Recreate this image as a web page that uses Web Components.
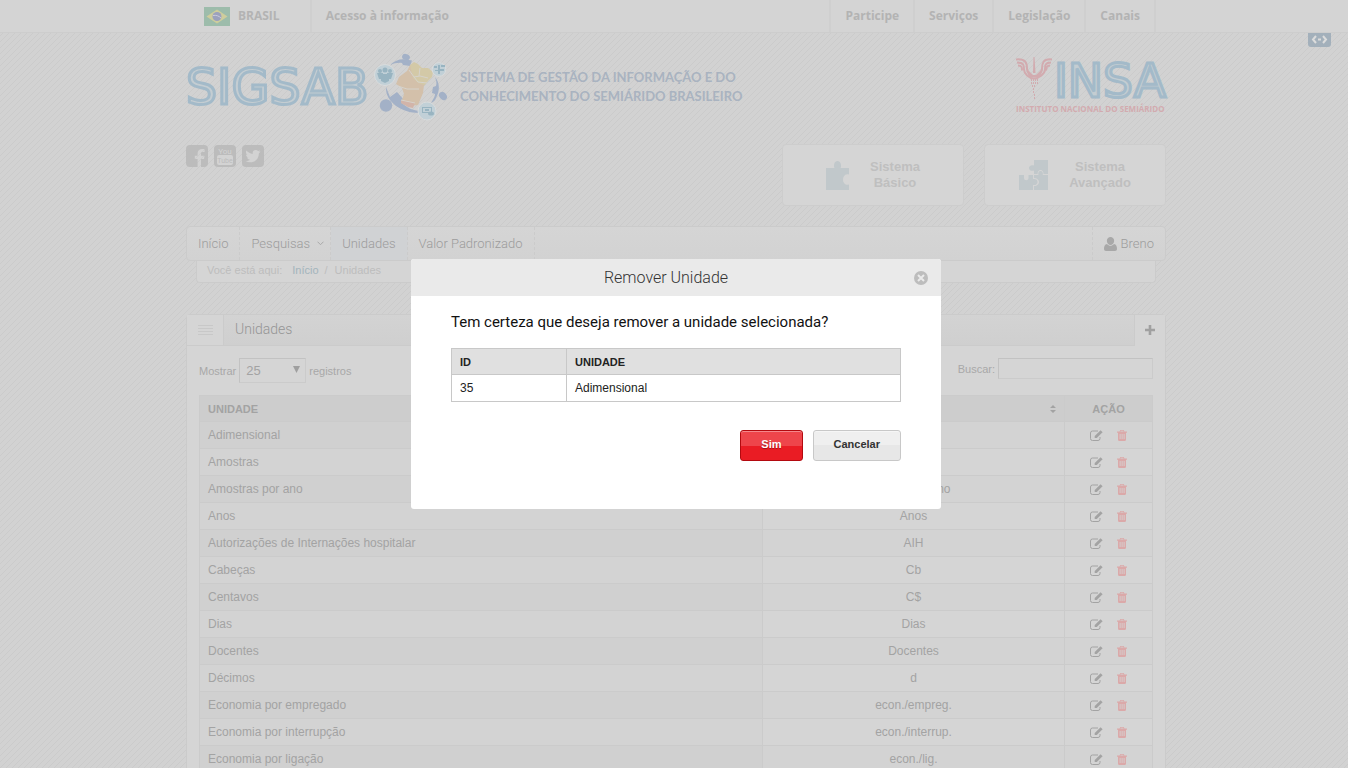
<!DOCTYPE html>
<html lang="pt-BR">
<head>
<meta charset="utf-8">
<title>SIGSAB - Unidades</title>
<style>
  html { height: 100%; overflow: hidden; }
  body {
    margin: 0;
    min-height: 100%;
    font: 11px/18px "Liberation Sans", Arial, sans-serif;
    color: #a8a8a8;
    background-color: #d2d2d2;
    background-image: linear-gradient(135deg, transparent 46%, #cbcbcb 46%, #cbcbcb 54%, transparent 54%);
    background-size: 6px 6px;
    --line: #cbcbcb;
    --panel: #d5d5d5;
    --light: Roboto, "Liberation Sans", sans-serif;
    --page: 980px;
  }
</style>
</head>
<body>
<sig-app></sig-app>
<script>
const define = (name, html, setup) => {
  const tpl = document.createElement('template');
  tpl.innerHTML = html;
  customElements.define(name, class extends HTMLElement {
    constructor() {
      super();
      this.attachShadow({ mode: 'open' }).append(tpl.content.cloneNode(true));
    }
    connectedCallback() { if (setup) setup(this, this.shadowRoot); }
  });
};

/* Icons, drawn in the current colour */
const ICONS = {
  facebook: ['0 0 22 22', '<path fill-rule="evenodd" d="M4 0h14a4 4 0 0 1 4 4v14a4 4 0 0 1-4 4h-3v-8h3l.5-3.300H15V8.700c0-1 .4-1.600 1.700-1.600h1.900V4.100c-.4-.1-1.400-.2-2.500-.2-2.700 0-4.500 1.600-4.500 4.500v2.300H8.800V14h2.800v8H4a4 4 0 0 1-4-4V4a4 4 0 0 1 4-4z"/>'],
  youtube: ['0 0 22 22', '<rect width="22" height="22" rx="4"/><rect x="3" y="10" width="16" height="10" rx="2" fill="#d3d3d3"/><text x="11" y="8.500" font-size="8" text-anchor="middle" fill="#d3d3d3" font-family="Roboto, Liberation Sans">You</text><text x="11" y="18" font-size="7" text-anchor="middle" font-family="Roboto, Liberation Sans">Tube</text>'],
  twitter: ['0 0 22 22', '<rect width="22" height="22" rx="4"/><path fill="#d3d3d3" d="M18.500 6.500c-.6.300-1.200.4-1.800.5.700-.4 1.100-1 1.400-1.700-.6.300-1.300.6-2 .7a3.100 3.100 0 0 0-5.300 2.900C8.200 8.700 6 7.500 4.400 5.600c-.8 1.500-.4 3.200 1 4.200-.5 0-1-.2-1.400-.4 0 1.500 1.100 2.800 2.500 3.100-.5.100-.9.100-1.400 0 .4 1.300 1.500 2.100 2.900 2.200-1.300 1-2.900 1.500-4.500 1.300 5.700 3.400 13.500.3 13.400-7.800.6-.5 1.200-1 1.600-1.700z"/>'],
  puzzle: ['0 0 23 29', '<path d="M0 7h8.500C7.500 5.500 7.800 0 11.500 0s4.200 5.500 3 7H23v6.500c-3-1-6 1-6 5s3 6 6 5V29H0z"/>'],
  puzzles: ['0 0 29 30', '<path d="M15 0h14v14h-4.500c0-2-1-4-3-4s-3 2-3 4H15v-3.500c-2.500 1-5-.3-5-2.500s2.500-3.500 5-2.500zM0 15h5v3c0 3 4.500 3 4.500 0v-3H14v4c3-.5 4.500.8 4.500 3s-2 3.500-4.500 3v5H0zM15 15h4.500c-.8-2 .3-4 2-4s3 2 2.200 4H29v15H15v-4c3.500 0 5-2 5-4s-2-4-5-4z"/>'],
  user: ['0 0 13 14', '<path d="M6.500 0a3.600 3.600 0 0 1 3.600 3.900C10.100 6 8.500 8 6.500 8S2.900 6 2.900 3.900A3.600 3.600 0 0 1 6.500 0zM3 7c2 2.400 5 2.400 7 0 2.300.2 3 2.700 3 5 0 1.200-.8 2-2 2H2c-1.200 0-2-.8-2-2 0-2.300.7-4.800 3-5z"/>'],
  caret: ['0 0 7 5', '<path fill="none" stroke="currentColor" d="M.5.7l3 3 3-3"/>'],
  list: ['0 0 15 11', '<path fill="none" stroke="currentColor" d="M0 .5h15M0 3.500h15M0 6.500h15M0 9.500h15"/>'],
  plus: ['0 0 10 10', '<path d="M3.700 0h2.600v3.700H10v2.600H6.300V10H3.700V6.300H0V3.700h3.700z"/>'],
  sort: ['0 0 6 8', '<path d="M0 3l3-3 3 3zM0 5h6L3 8z"/>'],
  arrow: ['0 0 7 7', '<path d="M0 0h7L3.500 7z"/>'],
  edit: ['0 0 13 11', '<path fill="none" stroke="currentColor" d="M8 1H2.500a2 2 0 0 0-2 2v5.500a2 2 0 0 0 2 2H8a2 2 0 0 0 2-2V7"/><path d="M10.600.3l2 2L6.800 8H4.700V6z"/>'],
  trash: ['0 0 10 11', '<path fill-rule="evenodd" d="M3.200 0h3.600l.6 1.500H10v1.200H9V9.500C9 10.400 8.500 11 7.700 11H2.300C1.500 11 1 10.400 1 9.500V2.700H0V1.500h2.600zM3.700.8l-.3.700h3.200l-.3-.7zM2.700 4v5h.8V4zm2 0v5h.8V4zm2 0v5h.8V4z"/>'],
  close: ['0 0 14 14', '<circle cx="7" cy="7" r="7"/><path stroke="#eaeaea" stroke-width="2" d="M4 4l6 6M10 4l-6 6"/>'],
  vlibras: ['0 0 23 14', '<path fill="none" stroke="#dcdcdc" stroke-width="2" d="M8 3L5 6.500 8 10M10 6.500h3M15 3l3 3.500L15 10"/>'],
  flag: ['0 0 26 19', '<path fill="#9dbcab" d="M0 0h26v19H0z"/><path fill="#cfcd9c" d="M13 2.500l10.500 7L13 16.500 2.500 9.500z"/><circle cx="13" cy="9.500" r="4.500" fill="#9ba1bd"/><path fill="none" stroke="#ccd" d="M9 8.500c3-.6 6 .4 8 2.500"/>'],
  emblem: ['0 0 76 70', `
    <g fill="#a3b1c7"><ellipse cx="32" cy="6" rx="4" ry="3" transform="rotate(20 32 6)"/>
    <path d="M16 14C21 9 27 7.500 32 8.500l6 1-2 5.500-7-1-1-2C24 11.500 20 12.500 16 14z"/>
    <circle cx="12" cy="54.500" r="6.200"/><path d="M12 36l4 10 7-5 7 8-2 3c5 5 12 8 20 8l-3 2C28 62 11 51 12 36z"/>
    <ellipse cx="69" cy="45" rx="3.500" ry="4.500" transform="rotate(-40 69 45)"/>
    <path d="M61 26c5 6 5 14 1 21-1 3-3 4-5 5 3-5 4-7 4-9l-3-1 1-6 3-1c1-3 0-6-1-9z"/></g>
    <path fill="#d3c9a7" d="M36 14l4-3 4 2 4 4 6 0 5 4-1 5-4 4-4 5-9-3-5-4z"/>
    <path fill="#d3c0aa" d="M36 14l3 13 5 5 6 2-1 8-5 12-9 1-8-3 3-9-2-6-6-4 3-7 8-6z"/>
    <path fill="#d2b4a9" d="M27 49l8 1 6 2-2 5-5-1-7-4z"/>
    <path fill="none" stroke="#d6d3cb" d="M35 19l5 7 6-1 8 2M40 26l4 5 9 1M46 17l-1 8M24 35l9 3 12 0M27 49l14 3"/>
    <g fill="#c1d0d7" stroke="#d9dcdd"><circle cx="11" cy="24" r="10.500"/><circle cx="65" cy="18.500" r="6.800"/><circle cx="53" cy="60" r="9"/></g>
    <g fill="#98b4c1"><circle cx="6" cy="20" r="2"/><circle cx="11" cy="19" r="2.500"/><circle cx="16" cy="20" r="2"/><path d="M3 22h6v6H5zM13 22h6l-2 6h-4zM7 23h8v7l-4 2-4-2z"/>
    <path d="M64 14h2v9h-2zM60 15h3v2h-3zM67 14h4v2h-4zM61 19h3v1h-3zM66 18h4v2h-4z"/>
    <path fill-rule="evenodd" d="M48 56h10v6H48zm1 1v4h8v-4z"/><ellipse cx="57" cy="62.500" rx="3" ry="2"/><path d="M51 58h4v2h-4z"/></g>`],
  bird: ['0 0 36 42', `<g fill="none" stroke="#d2abaf" stroke-width="2"><path d="M0 2.500c10-1 11 4 11 9s4 8 7 8 8-3 8-8 1-10 10-9"/><path d="M1 5.500c7 0 7 3 7 7s5 9 10 9 11-5 11-9 0-7 6-7"/><path d="M2 8.500c4 0 4 2 4 5"/><path d="M34 8.500c-4 0-3 2-4 5"/></g>
    <path fill="#d2abaf" d="M17.500 0h1l1 16H17zM10 11l7 7h3l7-7-3 9H13z"/><path stroke="#d2abaf" stroke-width="2" stroke-dasharray="1 1" d="M15 23h8M15 26h8M16 29h4M17 32h2M17 35h2M18 38h1M18 41h1"/>`]
};

define('sig-icon', `<style>
  :host { display: inline-block; flex: none; }
  svg { display: block; width: 100%; height: auto; }
</style><svg fill="currentColor" aria-hidden="true"></svg>`, (el, root) => {
  const [box, body] = ICONS[el.getAttribute('name')];
  const svg = root.querySelector('svg');
  svg.setAttribute('viewBox', box);
  svg.innerHTML = body;
  el.style.width = box.split(' ')[2] + 'px';
});

/* Federal government bar */
define('gov-bar', `<style>
  :host { display: block; background: #d4d4d4; border-bottom: 1px solid #cdcdcd; position: relative; }
  nav { display: flex; max-width: 960px; margin: 0 auto; height: 32px; padding-left: 8px; box-sizing: border-box;
        font: bold 12px/30px "Open Sans", "Noto Sans", sans-serif; }
  a { color: #b3b3b3; text-decoration: none; padding: 0 14px; border-right: 2px solid #cfcfcf; display: flex; align-items: center; white-space: nowrap; }
  .brand { padding: 0 30px 0 0; gap: 8px; }
  .first { border: 0; margin-right: auto; }
  .sep { border-left: 2px solid #cfcfcf; }
  .libras { position: absolute; right: 17px; top: 33px; padding: 0; border: 0; background: #a3b0bb; border-radius: 0 0 3px 3px; }
  sig-icon { display: block; }
</style>
<nav aria-label="Governo">
  <a class="brand" href="#"><sig-icon name="flag"></sig-icon>BRASIL</a>
  <a class="first" href="#">Acesso à informação</a>
  <a class="sep" href="#">Participe</a><a href="#">Serviços</a><a href="#">Legislação</a><a href="#">Canais</a>
</nav>
<button class="libras" aria-label="VLibras"><sig-icon name="vlibras"></sig-icon></button>`);

/* Shortcut card to one of the two systems */
define('system-card', `<style>
  :host { display: block; width: 182px; }
  a { display: flex; align-items: center; justify-content: center; gap: 21px; height: 60px; border: 1px solid #cdcdcd; border-radius: 4px;
      background: var(--panel); color: #bfbfbf; text-decoration: none; text-align: center; font: bold 13px/16px "Liberation Sans", Arial, sans-serif; }
  .ico { color: #c1c8cb; display: flex; }
</style><a href="#"><span class="ico"><slot name="icon"></slot></span><span><slot></slot></span></a>`);

define('site-header', `<style>
  :host { display: block; }
  .row { display: flex; justify-content: space-between; }
  .brand { display: flex; align-items: center; height: 70px; padding-top: 18px; }
  .word { color: #c4cdd2; -webkit-text-stroke: 3px #a3bac9; }
  h1 { margin: 0; padding-top: 3px; font: 49px/36px "DejaVu Sans", sans-serif; width: 188px; }
  p { margin: 0 0 0 10px; font: bold 13px/19px Lato, sans-serif; color: #a9b3c0; padding-top: 2px; }
  .insa { display: grid; grid-template-columns: 36px auto; column-gap: 2px; width: 150px; padding-top: 24px; align-content: start; }
  .insa .word { font: 47px/48px "DejaVu Sans", sans-serif; }
  .insa small { grid-column: 1 / 3; font: bold 8px/8px "Open Sans", sans-serif; color: #d2abaf; white-space: nowrap; }
  .social { display: flex; gap: 6px; padding-top: 24px; }
  .social a { color: #bcbcbc; }
  .cards { display: flex; gap: 20px; padding-top: 23px; padding-bottom: 20px; }
</style>
<div class="row">
  <div class="brand"><h1><span class="word">SIGSAB</span></h1><sig-icon name="emblem"></sig-icon>
    <p>SISTEMA DE GESTÃO DA INFORMAÇÃO E DO<br>CONHECIMENTO DO SEMIÁRIDO BRASILEIRO</p></div>
  <div class="insa"><sig-icon name="bird"></sig-icon><span class="word">INSA</span><small>INSTITUTO NACIONAL DO SEMIÁRIDO</small></div>
</div>
<div class="row">
  <div class="social"><a href="#" aria-label="Facebook"><sig-icon name="facebook"></sig-icon></a><a href="#" aria-label="YouTube"><sig-icon name="youtube"></sig-icon></a><a href="#" aria-label="Twitter"><sig-icon name="twitter"></sig-icon></a></div>
  <div class="cards">
    <system-card><sig-icon slot="icon" name="puzzle"></sig-icon>Sistema<br>Básico</system-card>
    <system-card><sig-icon slot="icon" name="puzzles"></sig-icon>Sistema<br>Avançado</system-card>
  </div>
</div>`);

define('main-nav', `<style>
  :host { display: block; }
  nav { display: flex; border: 1px solid var(--line); border-radius: 4px; background: linear-gradient(#d5d5d5, #d2d2d2); font: 300 13px/33px var(--light); }
  a { color: #9c9c9c; text-decoration: none; padding: 0 11px; border-right: 1px dashed var(--line); display: flex; align-items: center; gap: 7px; white-space: nowrap; }
  a.menu { padding-right: 6px; }
  a.on { background: #d0d2d4; }
  a.user { margin-left: auto; border-right: 0; border-left: 1px dashed var(--line); gap: 4px; }
  a sig-icon { color: #a8a8a8; }
  ol { list-style: none; display: flex; margin: 0 10px; padding: 0 10px 3px; border: 1px solid var(--line); border-top: 0; border-radius: 0 0 4px 4px;
       background: var(--panel); color: #bdbdbd; }
  li + li { margin-left: 10px; }
  li.now::before { content: "/"; margin: 0 7px 0 -4px; }
  ol a { display: inline; padding: 0; border: 0; color: #a3b4bc; }
</style>
<nav aria-label="Principal"><a href="#">Início</a><a class="menu" href="#">Pesquisas <sig-icon name="caret"></sig-icon></a><a class="on" href="#">Unidades</a><a href="#">Valor Padronizado</a><a class="user" href="#"><sig-icon name="user"></sig-icon>Breno</a></nav>
<ol><li>Você está aqui:</li><li><a href="#">Início</a></li><li class="now">Unidades</li></ol>`);

const UNITS = [
  ['Adimensional', '-'], ['Amostras', 'Amostras'], ['Amostras por ano', 'Amostras/ano'], ['Anos', 'Anos'],
  ['Autorizações de Internações hospitalar', 'AIH'], ['Cabeças', 'Cb'], ['Centavos', 'C$'], ['Dias', 'Dias'],
  ['Docentes', 'Docentes'], ['Décimos', 'd'], ['Economia por empregado', 'econ./empreg.'],
  ['Economia por interrupção', 'econ./interrup.'], ['Economia por ligação', 'econ./lig.']
];

define('units-panel', `<style>
  :host { display: block; margin-top: 31px; border: 1px solid var(--line); border-radius: 4px 4px 0 0; background: var(--panel); }
  header { display: flex; border-bottom: 1px solid var(--line); height: 30px; background: linear-gradient(#d3d3d3, #cfcfcf); }
  .cell { display: flex; align-items: center; justify-content: center; width: 36px; border-right: 1px solid var(--line); background: var(--panel); color: #c8c8c8; }
  h2 { margin: 0; flex: 1; padding-left: 11px; font: 300 14px/28px var(--light); color: #959595; }
  button { border: 0; padding: 0; background: none; color: inherit; display: inline-flex; }
  header button { width: 31px; align-items: center; justify-content: center; border-left: 1px solid var(--line); background: var(--panel); color: #a0a0a0; margin-bottom: -1px; padding-bottom: 2px; }
  .tools { display: flex; justify-content: space-between; align-items: flex-start; padding: 12px; }
  label { display: flex; align-items: center; gap: 3px; }
  .sel { position: relative; display: inline-flex; }
  .sel sig-icon { position: absolute; right: 6px; top: 8px; color: #9f9f9f; pointer-events: none; }
  select, input { appearance: none; box-sizing: border-box; margin: 0; background: var(--panel); border: 1px solid var(--line); border-color: #c2c2c2 #cbcbcb #cbcbcb #c2c2c2; border-radius: 0; color: #a3a3a3; font: 13px/18px "Liberation Sans", Arial, sans-serif; }
  select { width: 67px; height: 25px; padding: 0 6px; }
  input { width: 155px; height: 21px; }
  table { width: calc(100% - 24px); margin: 0 12px; border-collapse: collapse; table-layout: fixed; font-size: 12px; color: #a3a3a3; }
  .abbr { width: 302px; }
  .actions { width: 88px; }
  th, td { border: 1px solid var(--line); height: 26px; padding: 0 8px; box-sizing: border-box; line-height: 18px; text-align: center; }
  th { background: #cdcdcd; font-size: 11px; height: 26px; }
  td { height: 27px; }
  th:first-child, td:first-child { text-align: left; background: #d3d3d3; }
  th:first-child { background: #cdcdcd; }
  tr:nth-child(odd) td { background: #d3d3d3; }
  tr:nth-child(odd) td:first-child { background: #d0d0d0; }
  .sort { display: flex; justify-content: flex-end; }
  .act { display: flex; align-items: center; justify-content: center; gap: 14px; }
  .del { color: #dba9a9; }
</style>
<header><span class="cell"><sig-icon name="list"></sig-icon></span><h2>Unidades</h2><button aria-label="Adicionar"><sig-icon name="plus"></sig-icon></button></header>
<div class="tools">
  <label>Mostrar <span class="sel"><select><option>25</option><option>50</option></select><sig-icon name="arrow"></sig-icon></span> registros</label>
  <label>Buscar: <input type="search"></label>
</div>
<table><colgroup><col><col class="abbr"><col class="actions"></colgroup>
<thead><tr><th>UNIDADE</th><th aria-label="Sigla"><span class="sort"><sig-icon name="sort"></sig-icon></span></th><th>AÇÃO</th></tr></thead><tbody></tbody></table>`,
(el, root) => {
  root.querySelector('tbody').innerHTML = UNITS.map(([name, abbr]) => `<tr><td>${name}</td><td>${abbr}</td><td><span class="act">
    <button aria-label="Editar"><sig-icon name="edit"></sig-icon></button><button class="del" aria-label="Remover"><sig-icon name="trash"></sig-icon></button></span></td></tr>`).join('');
});

/* Modal window; body and footer come from the slots */
define('confirm-dialog', `<style>
  :host { position: fixed; inset: 0; display: grid; place-items: center; padding-left: 4px; color: #222; }
  section { width: 530px; max-width: 100%; min-height: 250px; background: #fff; border-radius: 3px; overflow: hidden; }
  header { display: flex; align-items: center; background: #eaeaea; padding: 0 13px 0 0; }
  h2 { flex: 1; margin: 0; padding-left: 7px; text-align: center; font: 300 16px/37px var(--light); color: #333; }
  header button { border: 0; padding: 0; background: none; color: #bdbdbd; display: flex; }
  .body { padding: 16px 40px 48px; }
  footer { display: flex; justify-content: flex-end; gap: 10px; padding-top: 28px; }
</style>
<section role="dialog" aria-modal="true" aria-labelledby="t"><header><h2 id="t"><slot name="title"></slot></h2><button aria-label="Fechar"><sig-icon name="close"></sig-icon></button></header>
<div class="body"><slot></slot><footer><slot name="action"></slot></footer></div></section>`);

define('push-button', `<style>
  :host { display: block; }
  button { height: 31px; padding: 0 20px 3px; border: 1px solid #c8c8c8; border-radius: 3px; color: #333; font: bold 11px/18px "Liberation Sans", Arial, sans-serif;
    background: linear-gradient(#efefef 0 50%, #e7e7e7 50%); box-shadow: inset 0 1px #f6f6f6; }
  :host([danger]) button { border-color: #b3090f; color: #fff; background: linear-gradient(#ee454b 0 50%, #ea1c24 50%); box-shadow: inset 0 1px #f4878b; text-shadow: 0 1px 1px #9d1216; }
</style><button><slot></slot></button>`);

define('remove-unit', `<style>
  :host { display: block; }
  p { margin: 0 0 15px; font: 15px/21px var(--light); color: #111; }
  table { width: 100%; border-collapse: collapse; table-layout: fixed; font-size: 12px; }
  th, td { border: 1px solid #c8c8c8; height: 27px; padding: 0 8px; box-sizing: border-box; text-align: left; line-height: 18px; }
  th { background: #e0e0e0; font-size: 11px; height: 26px; }
  th:first-child { width: 115px; }
</style>
<p>Tem certeza que deseja remover a unidade selecionada?</p>
<table><thead><tr><th>ID</th><th>UNIDADE</th></tr></thead><tbody><tr><td>35</td><td>Adimensional</td></tr></tbody></table>`);

define('sig-app', `<style>
  :host { display: block; }
  gov-bar, main { padding-left: 4px; }
  .page { max-width: var(--page); margin: 0 auto; }
</style>
<gov-bar></gov-bar>
<main><div class="page"><site-header></site-header><main-nav></main-nav><units-panel></units-panel></div></main>
<confirm-dialog><span slot="title">Remover Unidade</span><remove-unit></remove-unit>
  <push-button slot="action" danger>Sim</push-button><push-button slot="action">Cancelar</push-button></confirm-dialog>`);
</script>
</body>
</html>
